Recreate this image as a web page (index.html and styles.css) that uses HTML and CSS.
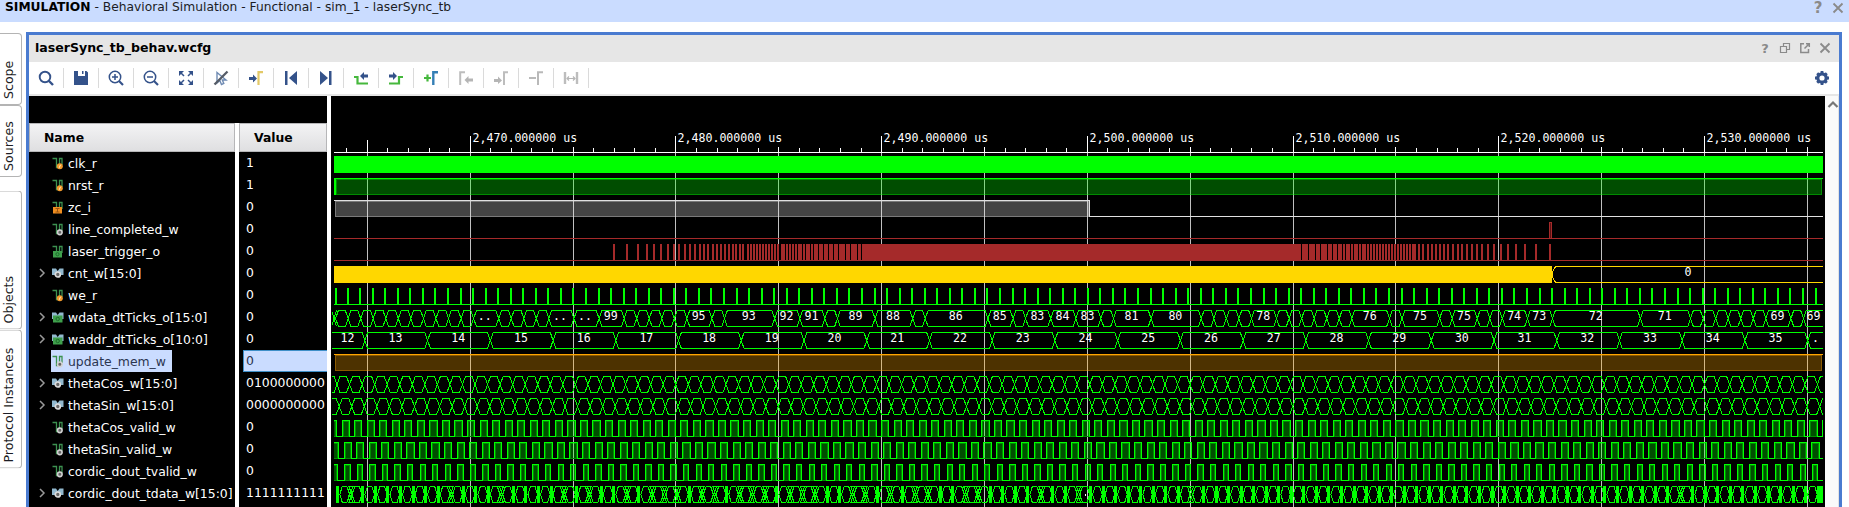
FILE: index.html
```html
<!DOCTYPE html>
<html lang="en">
<head>
<meta charset="utf-8">
<title>Simulation</title>
<link rel="stylesheet" href="styles.css">
</head>
<body>
<svg width="0" height="0" class="defs">
  <defs>
    <g id="wave"><path d="M0.5 1.5H4.5V10.5H7.5V1.5H10V8" fill="none" stroke="#3c9150" stroke-width="1.3"/></g>
    <g id="reg"><use href="#wave"/><circle cx="7.8" cy="9.3" r="3" fill="#f39a2c"/><path d="M7.2 10.8L8.5 7.8" stroke="#fff0c8"/></g>
    <g id="net"><use href="#wave"/><circle cx="7.8" cy="9.3" r="2.3" fill="#666" stroke="#d2d2d2" stroke-width="1.6"/></g>
    <g id="in"><use href="#wave"/><rect x="1" y="6" width="9" height="6.5" fill="#f08e20"/><path d="M3.5 7.5h4M3.5 11h4M5.5 7.5V11" stroke="#9c5510"/></g>
    <g id="out"><use href="#wave"/><rect x="1" y="6" width="9" height="6.5" fill="#3fa04c"/><circle cx="5.5" cy="9.2" r="1.6" fill="none" stroke="#1f6b2c"/></g>
    <path id="busbg" d="M0 1.500H4L5.700 4L7.500 1.500H11.500V8H8.500L5.700 6L3 8H0Z" fill="#92b9cf"/>
    <g id="bus"><use href="#busbg"/><circle cx="5.800" cy="7.500" r="2.500" fill="#666" stroke="#dcdcdc" stroke-width="1.700"/></g>
    <g id="busout"><use href="#busbg"/><rect x="1" y="4.500" width="9.500" height="7" fill="#3fa04c"/><circle cx="5.700" cy="8" r="1.700" fill="none" stroke="#1f6b2c"/></g>
    <path id="x" d="M1.500 1.500L10.500 10.500M10.500 1.500L1.500 10.500" fill="none" stroke="#8a8a8a" stroke-width="1.800"/>
  </defs>
</svg>

<header class="top">
  <div class="top-title"><b>SIMULATION</b> - Behavioral Simulation - Functional - sim_1 - laserSync_tb</div>
  <div class="top-actions"><span class="help">?</span><svg width="12" height="12"><use href="#x"/></svg></div>
</header>

<div class="body">
  <nav class="tabs">
    <div class="tab t1"><span>Scope</span></div>
    <div class="tab t1"><span>Sources</span></div>
    <div class="tab t2 gap"><span>Objects</span></div>
    <div class="tab t2"><span>Protocol Instances</span></div>
  </nav>

  <main class="panel">
    <div class="titlebar">
      <b>laserSync_tb_behav.wcfg</b>
      <div class="title-actions">
        <span class="help small">?</span>
        <svg width="12" height="12" fill="none" stroke="#8a8a8a" stroke-width="1.200"><path d="M4.500 4V1.500H10.500V7.500H8M1.500 4.500H7.500V10.500H1.500Z"/></svg>
        <svg width="12" height="12" fill="none" stroke="#8a8a8a" stroke-width="1.500"><path d="M5 1.800H1.800V10.500H9.500V7M5.500 6.500L9.500 2.500M7 1.800H10.300V5"/></svg>
        <svg width="12" height="12"><use href="#x"/></svg>
      </div>
    </div>

    <div class="toolbar">
      <div class="tool"><svg viewBox="0 0 16 16"><circle cx="7" cy="7" r="5.300" fill="none" stroke="#34528a" stroke-width="1.900"/><path d="M10.500 10.500L15 15" stroke="#34528a" stroke-width="2.400"/></svg></div>
      <div class="tool"><svg viewBox="0 0 16 16"><path d="M1 1H5V6H12V1H13.500L15 2.500V15H1Z" fill="#34528a"/><path d="M9 1h1.500v3H9z" fill="#34528a"/></svg></div>
      <div class="tool"><svg viewBox="0 0 16 16"><circle cx="7" cy="7" r="5.700" fill="none" stroke="#34528a" stroke-width="1.500"/><path d="M11 11L15 15" stroke="#34528a" stroke-width="2.200"/><path d="M4 7H10M7 4V10" stroke="#34528a" stroke-width="1.500"/></svg></div>
      <div class="tool"><svg viewBox="0 0 16 16"><circle cx="7" cy="7" r="5.700" fill="none" stroke="#34528a" stroke-width="1.500"/><path d="M11 11L15 15" stroke="#34528a" stroke-width="2.200"/><path d="M4 7H10" stroke="#34528a" stroke-width="1.500"/></svg></div>
      <div class="tool"><svg viewBox="0 0 16 16"><path d="M1 1H6L1 6ZM15 1H10L15 6ZM1 15H6L1 10ZM15 15H10L15 10Z" fill="#34528a"/><path d="M2 2L6 6M14 2L10 6M2 14L6 10M14 14L10 10" stroke="#34528a" stroke-width="1.500"/></svg></div>
      <div class="tool"><svg viewBox="0 0 16 16"><path d="M4 2.500V13L6.800 10.500L8.500 14.500L10.800 13.500L9.300 10H13Z" fill="none" stroke="#6f8bb3" stroke-width="1.400"/><path d="M1.500 14.500L14.500 1.500" stroke="#555b66" stroke-width="2.300"/></svg></div>
      <div class="tool"><svg viewBox="0 0 16 16"><path d="M1 7H5V4.500L9 8.500L5 12.500V10H1Z" fill="#34528a"/><path d="M10.500 15V2.200H15" fill="none" stroke="#e3c967" stroke-width="2.200"/></svg></div>
      <div class="tool"><svg viewBox="0 0 16 16"><path d="M2 1H4.500V15H2ZM14 1V15L6 8Z" fill="#34528a"/></svg></div>
      <div class="tool"><svg viewBox="0 0 16 16"><path d="M13.500 1H11V15H13.500ZM2 1V15L10 8Z" fill="#34528a"/></svg></div>
      <div class="tool"><svg viewBox="0 0 16 16"><path d="M1 7H4.500V13.500H15" fill="none" stroke="#46b83d" stroke-width="2.200"/><path d="M15 4.500H11V2L7 6L11 10V7.500H15Z" fill="#34528a"/></svg></div>
      <div class="tool"><svg viewBox="0 0 16 16"><path d="M1 13.500H11V7H15" fill="none" stroke="#46b83d" stroke-width="2.200"/><path d="M1 4.500H5V2L9 6L5 10V7.500H1Z" fill="#34528a"/></svg></div>
      <div class="tool"><svg viewBox="0 0 16 16"><path d="M1 8H8M4.500 4.500V11.500" stroke="#46b83d" stroke-width="2.200"/><path d="M10.300 15V2.200H15" fill="none" stroke="#357fb5" stroke-width="2.400"/></svg></div>
      <div class="tool off"><svg viewBox="0 0 16 16"><path d="M2.200 15V2.200H7" fill="none" stroke="#bdbdbd" stroke-width="2"/><path d="M15 8.500H10.500V6L6.500 10L10.500 14V11.500H15Z" fill="#b5b5b5"/></svg></div>
      <div class="tool off"><svg viewBox="0 0 16 16"><path d="M11 15V2.200H15" fill="none" stroke="#bdbdbd" stroke-width="2"/><path d="M1 9H5V6.500L9 10.500L5 14V12H1Z" fill="#b5b5b5"/></svg></div>
      <div class="tool off"><svg viewBox="0 0 16 16"><path d="M10 15V2.200H15M1 8H8" fill="none" stroke="#b9b9b9" stroke-width="2"/></svg></div>
      <div class="tool off"><svg viewBox="0 0 16 16"><path d="M2 2V14M14 2V14" stroke="#bdbdbd" stroke-width="2.400"/><path d="M4 8.500H12M6 6.500L4 8.500L6 10.500M10 6.500L12 8.500L10 10.500" fill="none" stroke="#b5b5b5" stroke-width="1.200"/></svg></div>
      <svg class="gear" width="16" height="16" viewBox="-8 -8 16 16"><circle r="4.200" fill="none" stroke="#34528a" stroke-width="3.200"/><path d="M0-7V-4M0 7V4M-7 0H-4M7 0H4M-4.800-4.800L-3-3M4.800 4.800L3 3M-4.800 4.800L-3 3M4.800-4.800L3-3" stroke="#34528a" stroke-width="2.800"/></svg>
    </div>

    <div class="content">
      <section class="table">
        <div class="col names"><div class="head">Name</div><div id="names"></div></div>
        <div class="col values"><div class="head">Value</div><div id="values"></div></div>
      </section>
      <svg id="waves" width="1494" height="411" viewBox="331 96 1494 411"></svg>
      <div class="scroll"><svg width="12" height="12" fill="none" stroke="#777" stroke-width="2.200"><path d="M1.500 9L6 4.500L10.500 9"/></svg></div>
    </div>
  </main>
</div>
<script src="waves.js"></script>
</body>
</html>
```
FILE: styles.css
```css
* { box-sizing: border-box; }
body {
  margin: 0;
  height: 507px;
  overflow: hidden;
  background: #fff;
  color: #1c1c24;
  font: 12.4px "DejaVu Sans", sans-serif;
}
.defs { position: absolute; }
svg { display: block; flex: none; }
.top {
  display: flex;
  justify-content: space-between;
  height: 22px;
  padding: 0 5px;
  background: #cadcff;
  font-size: 12.27px;
  line-height: 15px;
  white-space: pre;
}
.top-title b { color: #000; }
.top-actions { display: flex; gap: 8px; padding-top: 2px; }
.help { font: bold 15px/13px "DejaVu Sans", sans-serif; color: #8a8a8a; width: 12px; text-align: center; }
.help.small { font-size: 13px; }

.body { display: flex; height: 485px; }
.tabs { width: 22px; flex: none; padding-top: 11px; }
.tab {
  writing-mode: vertical-rl;
  transform: rotate(180deg);
  border: 1px solid #b4b4b4;
  border-right: 0;
  border-radius: 4px 0 0 4px;
  width: 22px;
  padding: 5px 0 0 4px;
  font-size: 12.6px;
  line-height: 17px;
  white-space: nowrap;
}
.t1 { height: 72px; }
.t2 { height: 138.500px; }
.gap { margin-top: 14px; }

.panel {
  width: 1816px;
  margin: 10px 0 0 4px;
  border: 3px solid #4a7bd0;
  border-bottom: 0;
  flex: none;
}
.titlebar {
  display: flex;
  justify-content: space-between;
  height: 27px;
  padding: 0 8px 0 6px;
  background: #e6e6e6;
  line-height: 26px;
  color: #000;
}
.titlebar b { font-size: 12.55px; }
.title-actions { display: flex; gap: 8px; padding-top: 7px; }
.toolbar {
  display: flex;
  align-items: center;
  height: 34px;
  border-bottom: 2px solid #e6e6e6;
}
.tool {
  width: 35px;
  height: 20px;
  border-right: 1px solid #dadada;
  display: flex;
  align-items: center;
  justify-content: center;
}
.tool svg { width: 16px; height: 16px; }
.gear { margin-left: auto; margin-right: 9px; }
.content { display: flex; height: 411px; }
.table {
  display: flex;
  gap: 4px;
  width: 298px;
  border-top: 27px solid #000;
  margin-right: 4px;
  color: #fff;
}
.col { background: #000; overflow: hidden; }
.names { width: 206px; }
.values { width: 88px; }
.head {
  height: 29px;
  padding-left: 14px;
  border: 1px solid #b6b6b8;
  background: linear-gradient(#f3f3f4, #dfdfe1);
  color: #000;
  font-weight: bold;
  line-height: 27px;
}
.name { display: flex; align-items: center; height: 22px; padding-left: 9px; }
.arrow { width: 13px; height: 10px; flex: none; }
.label { display: flex; align-items: center; gap: 4px; height: 22px; padding-left: 1px; white-space: nowrap; }
.name.sel .label { width: 121px; background: #cadcff; color: #2b3550; }
.value { height: 22px; line-height: 22px; padding-left: 3px; margin-left: 4px; white-space: nowrap; }
.value.sel { background: #cadcff; color: #2b3550; border: 1px solid #3e8fc8; border-right: 0; line-height: 20px; padding-left: 2px; }
#waves { background: #000; }
#waves text {
  font-family: "DejaVu Sans Mono", monospace;
  font-size: 11.6px;
  fill: #fff;
}
.scroll { width: 14px; background: #fafafa; border-right: 1px solid #e2e2e2; padding: 2px 0 0 2px; }
```
FILE: waves.js
```javascript
// Signal list: [name, value, icon]
const signals = [
  ["clk_r", "1", "reg"], ["nrst_r", "1", "reg"], ["zc_i", "0", "in"],
  ["line_completed_w", "0", "net"], ["laser_trigger_o", "0", "out"],
  ["cnt_w[15:0]", "0", "bus"], ["we_r", "0", "reg"],
  ["wdata_dtTicks_o[15:0]", "0", "busout"], ["waddr_dtTicks_o[10:0]", "0", "busout"],
  ["update_mem_w", "0", "net"], ["thetaCos_w[15:0]", "0100000000", "bus"],
  ["thetaSin_w[15:0]", "0000000000", "bus"], ["thetaCos_valid_w", "0", "net"],
  ["thetaSin_valid_w", "0", "net"], ["cordic_dout_tvalid_w", "0", "net"],
  ["cordic_dout_tdata_w[15:0]", "1111111111", "bus"]
];
const chevron = '<path d="M2 1L6 5L2 9" fill="none" stroke="#9a9a9a" stroke-width="1.5"/>';
document.getElementById("names").innerHTML = signals.map(([n, , icon], i) =>
  `<div class="name${i === 9 ? " sel" : ""}"><svg class="arrow">${n.includes("[") ? chevron : ""}</svg>` +
  `<div class="label"><svg width="12" height="13"><use href="#${icon}"/></svg><span>${n}</span></div></div>`).join("");
document.getElementById("values").innerHTML = signals.map(([, v], i) =>
  `<div class="value${i === 9 ? " sel" : ""}">${v}</div>`).join("");

const L = 334, R = 1823, P = 12.546, G = "#00ff00", BROWN = "#a52a2a";
const out = [];
const rect = (x, y, w, h, c, o = 1) => {
  const x0 = Math.max(x, L), x1 = Math.min(x + w, R);
  if (x1 > x0) out.push(`<rect x="${x0}" y="${y}" width="${x1 - x0}" height="${h}" fill="${c}" fill-opacity="${o}"/>`);
};
const line = (d, c) => out.push(`<path d="${d}" fill="none" stroke="${c}" stroke-width="1"/>`);
const text = (x, y, s, anchor = "middle") => out.push(`<text x="${x}" y="${y}" text-anchor="${anchor}">${s}</text>`);
const rowY = i => 156 + 22 * i;

// Ruler and grid
rect(L, 152, R - L, 1, "#fff");
for (let i = -6; i < 66; i++) {
  const x = Math.floor(470.2 + 20.572 * i);
  if (x < L || x >= R) continue;
  if (i % 5) { rect(x, 148, 1, 4, "#fff"); continue; }
  const top = i % 10 === 0 ? 136 : i === -5 ? 140 : 147;
  rect(x, top, 1, 17 + 136 - top, "#fff");
  rect(x, 153, 1, 354, "#c0c0c0");
  if (i % 10 === 0) text(x + 2.5, 142, `2,${470 + i}.000000 us`, "start");
}

// Translucent body with a dimmer inner frame
function body(x, y, w, h, c) {
  if (w < 1) return;
  rect(x, y, w, h, c, 0.3);
  if (w < 2) return;
  rect(x, y, w, 1, c, 0.35); rect(x, y + h - 1, w, 1, c, 0.35);
  rect(x, y + 1, 1, h - 2, c, 0.35); rect(x + w - 1, y + 1, 1, h - 2, c, 0.35);
}
rect(L, rowY(0), R - L, 17, G);
rect(L, rowY(1), R - L, 1, G); rect(L, rowY(1), 2, 17, G); body(336, rowY(1) + 1, 1486, 16, G);
rect(L, 200, 756, 1, "#e0e0e0"); body(335, 201, 754, 16, "#e0e0e0");
rect(1089, 200, 1, 17, "#e0e0e0"); rect(1089, 216, R - 1089, 1, "#e0e0e0");
rect(L, 238, R - L, 1, BROWN); rect(1549, 222, 3, 16, BROWN); rect(1550, 223, 1, 15, "#5a1212");

// Laser trigger: sparse pulses, a dense centre, sparse pulses again
rect(L, 260, R - L, 1, BROWN);
[613, 626, 637, 646, 653, 660, 667, 673, 678, 684, 689, 694, 699, 703, 707, 712, 716, 720, 724, 728, 732, 735, 739, 742, 747, 750,
  1414, 1418, 1422, 1427, 1431, 1435, 1439, 1443, 1447,
  1452, 1457, 1461, 1466, 1471, 1476, 1481, 1487, 1493, 1500, 1507, 1515, 1524, 1535, 1549].forEach(x => rect(x, 244, 2, 16, BROWN));
for (let x = 753; x < 780; x += 3) rect(x, 244, 2, 16, BROWN);
for (let x = 1367; x < 1414; x += 3) rect(x, 244, 2, 16, BROWN);
let at = 781;
[785, 788, 791, 794, 797, 802, 805, 810, 813, 818, 823, 828, 833, 838, 845, 850, 857, 861,
  1301, 1308, 1315, 1320, 1327, 1332, 1337, 1342, 1345, 1350, 1353, 1358, 1361, 1366].forEach(g => {
  rect(at, 244, g - at, 16, BROWN); at = g + 1;
});

// Counter
rect(L, 266, 1552 - L, 17, "#ffd700");
line("M1823 266.5H1555.5L1552.500 272V277L1555.500 282.500H1823", "#ffd700");
text(1688, 276, "0");

// Write-enable pulses
rect(L, 304, R - L, 1, G);
for (let k = 0; k < 119; k++) rect(Math.max(335, Math.floor(334.6 + P * k)), 288, 2, 16, G);

// Bus lane: crossings at each x in xs, flat rails between
function lane(xs, y, half) {
  let d = "";
  for (let i = 0; i < xs.length - 1; i++) {
    const a = xs[i], b = xs[i + 1];
    d += `M${a} ${y + 8.5}L${a + half} ${y + 0.5}H${b - half}L${b} ${y + 8.5}L${b - half} ${y + 16.5}H${a + half}Z`;
  }
  line(d, G);
}
const c = k => 335.6 + P * k;
const wide = [[11, 13, ".."], [17, 19, ".."], [19, 21, ".."], [21, 23, "99"], [28, 30, "95"], [31, 35, "93"], [35, 37, "92"],
  [37, 39, "91"], [40, 43, "89"], [43, 46, "88"], [47, 52, "86"], [52, 54, "85"], [55, 57, "83"], [57, 59, "84"],
  [59, 61, "83"], [62, 65, "81"], [65, 69, "80"], [73, 75, "78"], [81, 84, "76"], [85, 88, "75"], [89, 91, "75"],
  [93, 95, "74"], [95, 97, "73"], [97, 104, "72"], [104, 108, "71"], [114, 116, "69"], [117, 120, ""]];
const inside = k => wide.some(([a, b]) => k > a && k < b);
const data = [];
for (let k = 0; k <= 120; k++) if (!inside(k)) data.push(c(k));
out.push('<clipPath id="area"><rect x="332" y="150" width="491" height="357"/><rect x="823" y="150" width="1000" height="357"/></clipPath><g clip-path="url(#area)">');
lane(data, 310, 2.8);
line("M331.500 310.500L336.500 326.500M336.500 310.500L331.500 326.500", G);
wide.forEach(([a, b, s]) => s && text((c(a) + c(b)) / 2 - (s === ".." ? 1.5 : 0.8), 320, s));
text(1813.5, 320, "69");

const addr = [];
for (let j = -1; j < 25; j++) addr.push(364.9 + 62.73 * j);
lane(addr, 332, 2.8);
text(347.5, 342, "12");
for (let j = 0; j < 23; j++) text(364.9 + 62.73 * (j + 0.5) - 0.8, 342, 13 + j);
text(1815.5, 342, ".");
out.push("</g>");

rect(L, 354, R - L, 1, "#ffa500"); body(335, 355, 1487, 16, "#ffa500");

out.push('<g clip-path="url(#area)">');
const seq = (x0, n = 122) => Array.from({ length: n }, (_, k) => x0 + P * (k - 1));
lane(seq(337), 376, 3);
lane(seq(339.2), 398, 3);
out.push("</g>");

// Periodic valid strobes
function strobe(y, x0, w) {
  rect(L, y + 16, R - L, 1, G);
  for (let k = -1; k < 119; k++) {
    const x = Math.floor(x0 + P * k), e = Math.floor(x0 + P * k + w);
    rect(x + 1, y + 16, e - x - 2, 1, "#000");
    body(x + 1, y + 1, e - x - 2, 16, G);
    rect(x, y, e - x, 1, G); rect(x, y, 1, 17, G);
    if (e > L) rect(e - 1, y, 1, 17, G);
  }
}
strobe(420, 342, 8.2);
strobe(442, 344.1, 8.2);
strobe(464, 344.8, 6.3);

// Cordic data: settled words separated by bursts of transitions
const loose = new Set([1, 9, 13, 18, 20, 23, 25, 26, 27, 29, 30, 32, 33, 34, 36, 37, 38, 41, 42, 44, 46, 47, 50, 51, 56, 59, 68, 107]);
out.push('<g clip-path="url(#area)">');
for (let k = 0; k < 119; k++) {
  const x = 338.3 + P * k, n = x + P;
  if (loose.has(k)) {
    line(`M${x - 4} 486.500L${x + 2} 502.500M${x + 2} 486.500L${x - 4} 502.500M${x - 2} 486.500L${x + 4} 502.500M${x + 4} 486.500L${x - 2} 502.500M${x - 3} 486.500H${x + 3}M${x - 3} 502.500H${x + 3}`, G);
  } else {
    rect(Math.floor(x - 1.5), 486, 3, 17, G);
  }
  line(`M${x + 1.5} 494.500L${x + 4} 486.500H${n - 4}L${n - 1.5} 494.500L${n - 4} 502.500H${x + 4}Z`, G);
}
rect(1818, 486, 5, 17, G);
rect(1085, 494, 1, 2, "#fff");
out.push("</g>");

const svg = document.getElementById("waves");
svg.setAttribute("shape-rendering", "crispEdges");
svg.innerHTML = out.join("");
```
